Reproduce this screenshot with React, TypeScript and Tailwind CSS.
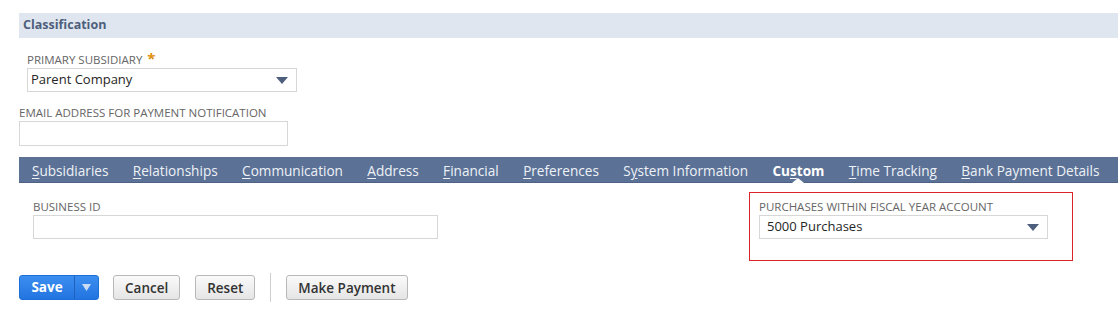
const tabs = [
  { pre: "", key: "S", rest: "ubsidiaries" },
  { pre: "", key: "R", rest: "elationships" },
  { pre: "", key: "C", rest: "ommunication" },
  { pre: "", key: "A", rest: "ddress" },
  { pre: "", key: "F", rest: "inancial" },
  { pre: "", key: "P", rest: "references" },
  { pre: "S", key: "y", rest: "stem Information" },
  { pre: "Cu", key: "s", rest: "tom", active: true },
  { pre: "", key: "T", rest: "ime Tracking" },
  { pre: "", key: "B", rest: "ank Payment Details" },
];

function Arrow() {
  return (
    <svg width="12" height="7" viewBox="0 0 12 7" className="shrink-0">
      <path d="M0 0 H12 L6 7 Z" fill="#4d5f7c" />
    </svg>
  );
}

function Select({ value, width, pad }: { value: string; width: string; pad: string }) {
  return (
    <div className={`${width} ${pad} h-[24px] border border-[#d7d7d7] bg-white flex items-center justify-between pr-[8px]`}>
      <span className="text-[13px] text-[#262626] whitespace-nowrap">{value}</span>
      <Arrow />
    </div>
  );
}

function Label({ children }: { children: React.ReactNode }) {
  return <div className="h-[14px] text-[11.5px] leading-[14px] text-[#666] uppercase whitespace-nowrap">{children}</div>;
}

function GrayButton({ children }: { children: React.ReactNode }) {
  return (
    <button className="h-[25px] px-[11px] rounded-[3px] border border-[#b8b8b8] bg-gradient-to-b from-[#fafafa] to-[#e5e5e5] text-[13.5px] font-semibold text-[#333] whitespace-nowrap">
      {children}
    </button>
  );
}

export default function App() {
  return (
    <div className="w-[1118px] h-[316px] bg-white overflow-hidden pt-[13px] font-['Open_Sans',sans-serif]">
      <div className="ml-[19px] h-[25px] bg-[#e0e6ef] flex items-center pl-[4px]">
        <span className="text-[12.5px] font-bold text-[#4d5f7c]">Classification</span>
      </div>

      <div className="ml-[27px] mt-[15px]">
        <Label>
          Primary Subsidiary <span className="ml-[2px] text-[#e08e0b] text-[15px] font-bold leading-[10px]">*</span>
        </Label>
        <div className="mt-[1px]">
          <Select value="Parent Company" width="w-[270px]" pad="pl-[3px]" />
        </div>
      </div>

      <div className="ml-[19px] mt-[14px]">
        <Label>Email Address for Payment Notification</Label>
        <div className="mt-[1px] w-[269px] h-[25px] border border-[#d7d7d7] bg-white" />
      </div>

      <div className="ml-[19px] mt-[11px] h-[26px] bg-[#5b7196] flex items-center gap-[24.4px] pl-[13px] pt-[3px] border-b border-[#4d6285]">
        {tabs.map((t) => (
          <div
            key={t.key + t.rest}
            className={`relative text-[13.6px] h-full flex items-center whitespace-nowrap ${t.active ? "font-bold text-white" : "text-[#eef1f6]"}`}
          >
            <span>
              {t.pre}
              <span className="underline underline-offset-2">{t.key}</span>
              {t.rest}
            </span>
            {t.active && (
              <span className="absolute bottom-[-1px] left-1/2 -translate-x-1/2 w-0 h-0 border-l-[6px] border-r-[6px] border-b-[5px] border-l-transparent border-r-transparent border-b-white" />
            )}
          </div>
        ))}
      </div>

      <div className="flex mt-[9px]">
        <div className="ml-[33px] pt-[8px]">
          <Label>Business ID</Label>
          <div className="mt-[1px] w-[405px] h-[24px] border border-[#d7d7d7] bg-white" />
        </div>
        <div className="ml-[311px] w-[324px] h-[69px] border border-[#d9252a] pl-[9px] pt-[7px]">
          <Label>Purchases within Fiscal Year Account</Label>
          <div className="mt-[1px]">
            <Select value="5000 Purchases" width="w-[289px]" pad="pl-[7px]" />
          </div>
        </div>
      </div>

      <div className="ml-[19px] mt-[12px] flex items-center">
        <div className="flex h-[25px] rounded-[3px] border border-[#1c6fd6] bg-gradient-to-b from-[#3d8ef0] to-[#2274e0] overflow-hidden">
          <button className="w-[54px] text-[13.5px] font-bold text-white">Save</button>
          <div className="w-[1px] bg-[#1d63bd]" />
          <div className="w-[23px] flex items-center justify-center">
            <svg width="9" height="7" viewBox="0 0 9 7">
              <path d="M0 0 H9 L4.5 7 Z" fill="#c9dcf6" />
            </svg>
          </div>
        </div>
        <div className="ml-[14px]">
          <GrayButton>Cancel</GrayButton>
        </div>
        <div className="ml-[15px]">
          <GrayButton>Reset</GrayButton>
        </div>
        <div className="ml-[15px] w-[1px] h-[29px] bg-[#cfcfcf]" />
        <div className="ml-[15px]">
          <GrayButton>Make Payment</GrayButton>
        </div>
      </div>
    </div>
  );
}
